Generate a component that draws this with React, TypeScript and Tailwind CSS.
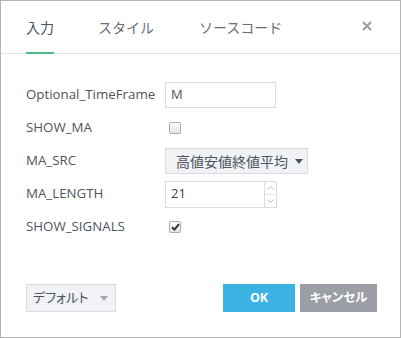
import React from "react";

const jp = "font-['Open_Sans','Noto_Sans_CJK_JP',sans-serif]";

const Checkbox = ({ checked }: { checked?: boolean }) => (
	<div className="flex h-[12px] w-[12px] items-center justify-center rounded-[2px] border border-[#a9acb3] bg-gradient-to-b from-[#fdfdfd] to-[#e4e5e8]">
		{checked && (
			<svg width="9" height="8" viewBox="0 0 9 8">
				<path d="M1 4.2 L3.4 6.6 L8 1.2" stroke="#2f3238" strokeWidth="2" fill="none" />
			</svg>
		)}
	</div>
);

const Row = ({ label, children }: { label: string; children: React.ReactNode }) => (
	<div className="flex h-[26px] items-center">
		<div className="w-[139px] text-[13.3px] text-[#50545d]">{label}</div>
		<div className="flex items-center">{children}</div>
	</div>
);

export default function App() {
	return (
		<div className={`flex h-[338px] w-[401px] flex-col border border-[#b4b4b4] bg-white ${jp}`}>
			<div className="relative flex h-[53px] shrink-0 items-center border-b border-[#e0e2e6] pl-[25px]">
				<div className="relative flex h-full items-center text-[14px] text-[#4c525e]">
					入力
					<div className="absolute bottom-[-1px] left-0 right-0 h-[2px] bg-[#53b987]" />
				</div>
				<div className="ml-[44px] text-[14px] text-[#6a6d78]">スタイル</div>
				<div className="ml-[45px] text-[14px] text-[#6a6d78]">ソースコード</div>
				<div className="absolute right-[28px] top-[20px]">
					<svg width="10" height="10" viewBox="0 0 10 10">
						<path d="M1 1 L9 9 M9 1 L1 9" stroke="#9a9ca3" strokeWidth="2" />
					</svg>
				</div>
			</div>

			<div className="flex flex-1 flex-col gap-[7px] pl-[25px] pt-[28px]">
				<Row label="Optional_TimeFrame">
					<div className="flex h-[26px] w-[111px] items-center border border-[#dadce0] px-[5px] text-[13px] text-[#50535a]">
						M
					</div>
				</Row>
				<Row label="SHOW_MA">
					<div className="pl-[4px]">
						<Checkbox />
					</div>
				</Row>
				<Row label="MA_SRC">
					<div className="flex h-[26px] w-[143px] items-center border border-[#dadce0] bg-[#f1f2f6] pl-[10px] text-[14px] text-[#4c525e]">
						高値安値終値平均
						<svg className="ml-[7px]" width="8" height="5" viewBox="0 0 8 5">
							<path d="M0 0 L8 0 L4 5 Z" fill="#4c525e" />
						</svg>
					</div>
				</Row>
				<Row label="MA_LENGTH">
					<div className="flex h-[27px] w-[112px] border border-[#dadce0] text-[13px] text-[#3b3e45]">
						<div className="flex flex-1 items-center px-[5px]">21</div>
						<div className="flex w-[12px] flex-col border-l border-[#dadce0]">
							<div className="flex flex-1 items-center justify-center">
								<svg width="7" height="4" viewBox="0 0 7 4">
									<path d="M0.5 3.5 L3.5 0.5 L6.5 3.5" stroke="#b4b7bd" fill="none" />
								</svg>
							</div>
							<div className="h-px bg-[#e6e7ea]" />
							<div className="flex flex-1 items-center justify-center">
								<svg width="7" height="4" viewBox="0 0 7 4">
									<path d="M0.5 0.5 L3.5 3.5 L6.5 0.5" stroke="#b4b7bd" fill="none" />
								</svg>
							</div>
						</div>
					</div>
				</Row>
				<Row label="SHOW_SIGNALS">
					<div className="pl-[4px]">
						<Checkbox checked />
					</div>
				</Row>
			</div>

			<div className="flex items-center pb-[25px] pl-[25px] pr-[23px]">
				<div className="flex h-[28px] w-[90px] items-center border border-[#dadce0] bg-[#f1f2f6] pl-[6px] text-[13px] text-[#4c525e] [font-feature-settings:'palt']">
					デフォルト
					<svg className="ml-[12px]" width="8" height="5" viewBox="0 0 8 5">
						<path d="M0 0 L8 0 L4 5 Z" fill="#a3a6ad" />
					</svg>
				</div>
				<div className="flex-1" />
				<div className="flex h-[28px] w-[72px] items-center justify-center bg-[#3db3e3] text-[12.5px] font-bold text-white">
					OK
				</div>
				<div className="ml-[5px] flex h-[28px] w-[77px] items-center justify-center bg-[#9c9ea5] text-[12.5px] font-bold text-white [font-feature-settings:'palt']">
					キャンセル
				</div>
			</div>
		</div>
	);
}
